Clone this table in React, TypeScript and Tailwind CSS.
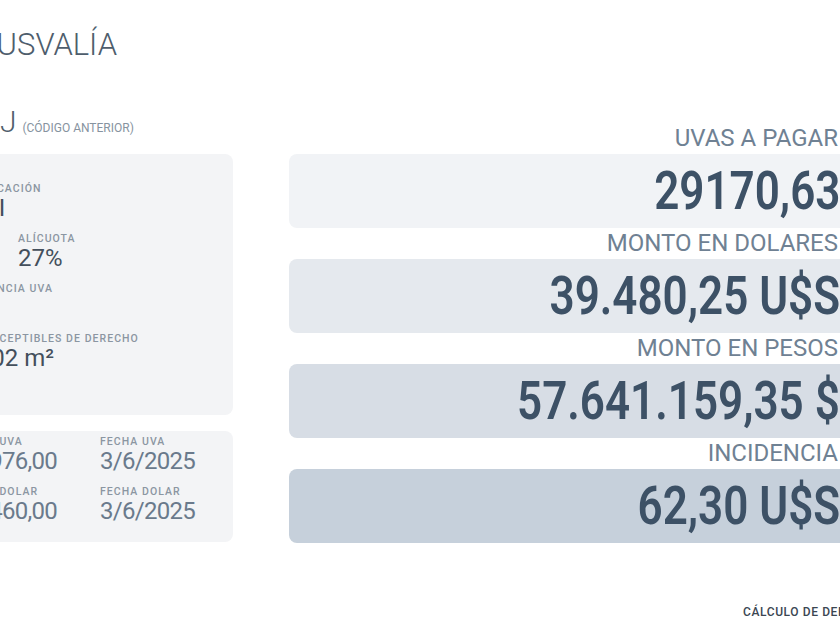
import React from 'react';

const label = 'text-[10.5px] leading-[12px] font-medium tracking-[0.1em] text-[#8b96a2] uppercase';
const darkValue = 'text-[24px] leading-[26px] text-[#434f5c]';
const softValue = 'text-[24px] leading-[26px] tracking-[-0.03em] text-[#6a7a8c]';

const totals = [
  { title: 'UVAS A PAGAR', value: '29170,63', bg: 'bg-[#f1f3f6]' },
  { title: 'MONTO EN DOLARES', value: '39.480,25 U$S', bg: 'bg-[#e5e9ee]' },
  { title: 'MONTO EN PESOS', value: '57.641.159,35 $', bg: 'bg-[#d7dde5]' },
  { title: 'INCIDENCIA', value: '62,30 U$S', bg: 'bg-[#c6d0db]' },
];

function Field({ name, value, tone = darkValue }: { name: string; value: string; tone?: string }) {
  return (
    <div>
      <p className={label}>{name}</p>
      <p className={tone}>{value}</p>
    </div>
  );
}

export default function App() {
  return (
    <div className="h-[630px] w-[840px] overflow-hidden bg-white font-['Roboto',sans-serif]">
      <div className="-ml-[60px] w-[930px] pt-[26px]">
        <h1 className="pl-[22px] text-[31px] leading-[37px] font-light text-[#4e5d6c]">PLUSVALÍA</h1>

        <div className="mt-[41px] flex gap-[56px]">
          {/* left column */}
          <div className="w-[293px] shrink-0">
            <div className="flex items-baseline gap-[6px] pl-[18px]">
              <span className="text-[30px] leading-[36px] font-light text-[#4f5d6b]">15-J</span>
              <span className="text-[12px] text-[#8693a0]">(CÓDIGO ANTERIOR)</span>
            </div>

            <div className="mt-[14px] flex h-[261px] flex-col gap-[12px] rounded-lg bg-[#f3f4f6] pl-[18px] pt-[29px]">
              <Field name="ZONIFICACIÓN" value="R-2 I" />
              <div className="grid grid-cols-[60px_1fr]">
                <Field name="FOT" value="2,5" />
                <Field name="ALÍCUOTA" value="27%" />
              </div>
              <Field name="INCIDENCIA UVA" value="24" />
              <Field name="M² SUSCEPTIBLES DE DERECHO" value="1.202 m²" />
            </div>

            <div className="mt-4 grid h-[111px] grid-cols-[142px_1fr] content-start gap-y-[12px] rounded-lg bg-[#f3f4f6] pl-[18px] pt-[5px]">
              <Field name="VALOR UVA" value="$1.976,00" tone={softValue} />
              <Field name="FECHA UVA" value="3/6/2025" tone={softValue} />
              <Field name="VALOR DOLAR" value="$1.460,00" tone={softValue} />
              <Field name="FECHA DOLAR" value="3/6/2025" tone={softValue} />
            </div>
          </div>

          {/* right column */}
          <div className="min-w-0 flex-1 pt-[19px]">
            {totals.map((t) => (
              <div key={t.title}>
                <p className="pr-[32px] text-right text-[24px] leading-[31px] text-[#6f8193]">{t.title}</p>
                <div className={`flex h-[74px] items-center justify-end rounded-lg pr-[30px] ${t.bg}`}>
                  <span className="origin-right scale-x-[0.83] whitespace-nowrap text-[53px] leading-none font-semibold text-[#3d5166]">
                    {t.value}
                  </span>
                </div>
              </div>
            ))}
            <p className="ml-[454px] mt-[61px] whitespace-nowrap text-[12px] leading-[16px] font-medium tracking-[0.05em] text-[#3b4652]">
              CÁLCULO DE DERECHO DE PLUSVALÍA
            </p>
          </div>
        </div>
      </div>
    </div>
  );
}
